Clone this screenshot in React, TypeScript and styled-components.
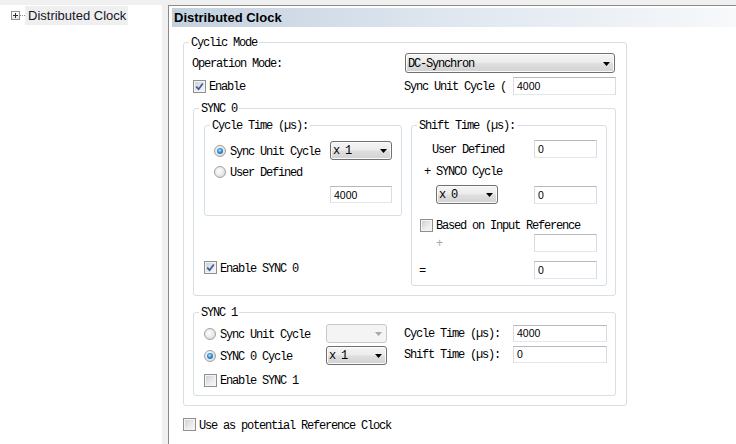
import React from "react";
import styled, { createGlobalStyle, css } from "styled-components";

const Global = createGlobalStyle`
  html, body { margin: 0; padding: 0; background: #f0f0f0; }
  body { width: 736px; height: 444px; overflow: hidden; }
`;

const monoFont = css`
  font-family: "Liberation Mono", "DejaVu Sans Mono", monospace;
  font-size: 12px;
  letter-spacing: -1.2px;
  white-space: nowrap;
`;

const Screen = styled.div`
  display: flex;
  gap: 6px;
  height: 444px;
  padding-top: 5px;
  box-sizing: border-box;
`;

const TreePane = styled.div`
  width: 162px;
  flex: none;
  background: #fff;
`;

const TreeItem = styled.div`
  display: flex;
  align-items: center;
  height: 19px;
  padding-top: 1px;
`;

const Expander = styled.span`
  position: relative;
  width: 9px;
  height: 9px;
  box-sizing: border-box;
  margin-left: 11px;
  border: 1px solid #919191;
  background: linear-gradient(#ffffff, #e4e4e4);
  flex: none;
  &::before {
    content: "";
    position: absolute;
    left: 1px;
    top: 3px;
    width: 5px;
    height: 1px;
    background: #2b2b2b;
  }
  &::after {
    content: "";
    position: absolute;
    left: 3px;
    top: 1px;
    width: 1px;
    height: 5px;
    background: #2b2b2b;
  }
`;

const Connector = styled.span`
  width: 5px;
  border-top: 1px dotted #8a8a8a;
  flex: none;
`;

const TreeLabel = styled.span`
  height: 19px;
  line-height: 19px;
  padding: 0 2px 0 3px;
  margin-top: -1px;
  background: #efefef;
  font-family: "Liberation Sans", Arial, sans-serif;
  font-size: 13px;
  color: #141428;
  white-space: nowrap;
`;

const MainPane = styled.div`
  flex: 1;
  background: #fff;
  border-top: 1px solid #8a8a8a;
  border-left: 1px solid #8a8a8a;
  display: flex;
  flex-direction: column;
`;

const Header = styled.div`
  margin: 2px 0 0 3px;
  height: 19px;
  line-height: 19px;
  padding-left: 2px;
  background: linear-gradient(90deg, #c3d1df 0%, #dde5ee 45%, #f7f9fb 100%);
  font-family: "Liberation Sans", Arial, sans-serif;
  font-weight: bold;
  font-size: 13px;
  color: #000;
`;

const Body = styled.div`
  padding: 15px 0 0 14px;
`;

const Group = styled.div<{ $pad: string; $w?: number; $mt?: number }>`
  position: relative;
  box-sizing: border-box;
  border: 1px solid #d5dfe5;
  border-radius: 3px;
  padding: ${(p) => p.$pad};
  margin-top: ${(p) => p.$mt ?? 0}px;
  ${(p) => (p.$w !== undefined ? `width: ${p.$w}px; flex: none;` : "")}
`;

const Legend = styled.span`
  ${monoFont};
  position: absolute;
  top: -8px;
  left: 5px;
  padding: 1px 2px 0;
  line-height: 14px;
  background: #fff;
  color: #000;
`;

const Mono = styled.span<{ $ml?: number; $w?: number; $c?: string }>`
  ${monoFont};
  padding-top: 2px;
  color: ${(p) => p.$c ?? "#000"};
  margin-left: ${(p) => p.$ml ?? 0}px;
  ${(p) => (p.$w !== undefined ? `width: ${p.$w}px; flex: none; overflow: hidden;` : "")}
`;

const Line = styled.div<{ $mt?: number; $mb?: number; $h: number; $between?: boolean }>`
  display: flex;
  align-items: center;
  height: ${(p) => p.$h}px;
  margin-top: ${(p) => p.$mt ?? 0}px;
  margin-bottom: ${(p) => p.$mb ?? 0}px;
  justify-content: ${(p) => (p.$between ? "space-between" : "flex-start")};
`;

const Choice = styled.label<{ $w?: number; $gap: number }>`
  display: flex;
  align-items: center;
  gap: ${(p) => p.$gap}px;
  ${(p) => (p.$w !== undefined ? `width: ${p.$w}px; flex: none;` : "")}
`;

const Columns = styled.div<{ $gap: number }>`
  display: flex;
  gap: ${(p) => p.$gap}px;
`;

const Column = styled.div<{ $w?: number; $spread?: boolean }>`
  display: flex;
  flex-direction: column;
  justify-content: ${(p) => (p.$spread ? "space-between" : "flex-start")};
  ${(p) => (p.$w !== undefined ? `width: ${p.$w}px; flex: none;` : "")}
`;

const CheckBoxFrame = styled.span`
  position: relative;
  width: 13px;
  height: 13px;
  box-sizing: border-box;
  border: 1px solid #8e8f8f;
  background: linear-gradient(135deg, #c9cbcd 0%, #e9eaeb 55%, #f8f8f8 100%);
  box-shadow: inset 0 0 0 1px #f4f4f4;
  flex: none;
  display: flex;
  align-items: center;
  justify-content: center;
`;

const RadioDot = styled.span<{ $on?: boolean }>`
  width: 12px;
  height: 12px;
  box-sizing: border-box;
  border-radius: 50%;
  border: 1px solid #a0a0a0;
  background: radial-gradient(circle at 40% 40%, #fdfdfd 0%, #e6e6e6 60%, #cfcfcf 100%);
  flex: none;
  display: flex;
  align-items: center;
  justify-content: center;
  &::after {
    content: "";
    display: ${(p) => (p.$on ? "block" : "none")};
    width: 6px;
    height: 6px;
    border-radius: 50%;
    background: radial-gradient(circle at 45% 40%, #bfe8ff 0%, #2f8fd8 45%, #114f90 100%);
  }
`;

const SelectBox = styled.div<{ $w: number; $h: number; $ml?: number; $disabled?: boolean }>`
  ${monoFont};
  box-sizing: border-box;
  width: ${(p) => p.$w}px;
  height: ${(p) => p.$h}px;
  margin-left: ${(p) => p.$ml ?? 0}px;
  flex: none;
  border: 1px solid ${(p) => (p.$disabled ? "#c9c9c9" : "#707070")};
  border-radius: 3px;
  background: ${(p) =>
    p.$disabled
      ? "#f4f4f4"
      : "linear-gradient(#f5f5f5 0%, #ececec 45%, #dedede 55%, #d2d2d2 100%)"};
  box-shadow: ${(p) => (p.$disabled ? "none" : "inset 0 0 0 1px #fbfbfb")};
  display: flex;
  align-items: center;
  justify-content: space-between;
  padding: 1px 4px 0 2px;
  color: #000;
`;

const FieldBox = styled.div<{ $w: number; $h: number; $ml?: number }>`
  box-sizing: border-box;
  width: ${(p) => p.$w}px;
  height: ${(p) => p.$h}px;
  margin-left: ${(p) => p.$ml ?? 0}px;
  flex: none;
  border: 1px solid;
  border-color: #b5b8bd #d8dce2 #e3e7ec #d8dce2;
  background: #fff;
  display: flex;
  align-items: center;
  padding-left: 3px;
  font-family: "Liberation Sans", Arial, sans-serif;
  font-size: 10.5px;
  color: #000;
`;

const Check = ({ on }: { on?: boolean }) => (
  <CheckBoxFrame>
    {on && (
      <svg width="9" height="9" viewBox="0 0 9 9">
        <path d="M1.2 4.6 L3.6 7.2 L7.8 1.4" fill="none" stroke="#3d5a9e" strokeWidth="1.7" />
      </svg>
    )}
  </CheckBoxFrame>
);

const Select = ({
  w,
  h,
  value,
  ml,
  disabled,
}: {
  w: number;
  h: number;
  value?: string;
  ml?: number;
  disabled?: boolean;
}) => (
  <SelectBox $w={w} $h={h} $ml={ml} $disabled={disabled}>
    <span>{value}</span>
    <svg width="7" height="4" viewBox="0 0 7 4">
      <path d="M0 0 H7 L3.5 4 Z" fill={disabled ? "#a9a9a9" : "#000"} />
    </svg>
  </SelectBox>
);

const Field = ({ w, h, ml, children }: { w: number; h: number; ml?: number; children?: React.ReactNode }) => (
  <FieldBox $w={w} $h={h} $ml={ml}>
    {children}
  </FieldBox>
);

export default function App() {
  return (
    <>
      <Global />
      <Screen>
        <TreePane>
          <TreeItem>
            <Expander />
            <Connector />
            <TreeLabel>Distributed Clock</TreeLabel>
          </TreeItem>
        </TreePane>
        <MainPane>
          <Header>Distributed Clock</Header>
          <Body>
            <Group $pad="10px 10px 9px 9px" $w={444}>
              <Legend>Cyclic Mode</Legend>
              <Line $h={20}>
                <Mono $ml={-1} $w={213}>
                  Operation Mode:
                </Mono>
                <Select w={210} h={20} value="DC-Synchron" />
              </Line>
              <Line $mt={4} $h={18}>
                <Choice $w={211} $gap={3}>
                  <Check on />
                  <Mono>Enable</Mono>
                </Choice>
                <Mono $w={109}>Sync Unit Cycle (</Mono>
                <Field w={103} h={18}>
                  4000
                </Field>
              </Line>

              <Group $pad="16px 8px 9px 10px" $mt={13}>
                <Legend>SYNC 0</Legend>
                <Columns $gap={9}>
                  <Column $w={198} $spread>
                    <Group $pad="15px 9px 12px 9px">
                      <Legend>Cycle Time (µs):</Legend>
                      <Line $h={19}>
                        <Choice $w={116} $gap={4}>
                          <RadioDot $on />
                          <Mono>Sync Unit Cycle</Mono>
                        </Choice>
                        <Select w={62} h={19} value="x 1" />
                      </Line>
                      <Line $mt={3} $h={18}>
                        <Choice $gap={4}>
                          <RadioDot />
                          <Mono>User Defined</Mono>
                        </Choice>
                      </Line>
                      <Line $mt={5} $h={17}>
                        <Field w={62} h={17} ml={116}>
                          4000
                        </Field>
                      </Line>
                    </Group>
                    <Line $h={17} $mb={10}>
                      <Choice $gap={3}>
                        <Check on />
                        <Mono>Enable SYNC 0</Mono>
                      </Choice>
                    </Line>
                  </Column>

                  <Group $pad="14px 9px 6px 8px" $w={196}>
                    <Legend>Shift Time (µs):</Legend>
                    <Line $h={18} $between>
                      <Mono $ml={12}>User Defined</Mono>
                      <Field w={63} h={18}>
                        0
                      </Field>
                    </Line>
                    <Line $mt={4} $h={18}>
                      <Mono $ml={4}>+ SYNCO Cycle</Mono>
                    </Line>
                    <Line $mt={5} $h={19} $between>
                      <Select ml={16} w={62} h={19} value="x 0" />
                      <Field w={63} h={18}>
                        0
                      </Field>
                    </Line>
                    <Line $mt={13} $h={16}>
                      <Choice $gap={3}>
                        <Check />
                        <Mono>Based on Input Reference</Mono>
                      </Choice>
                    </Line>
                    <Line $mt={1} $h={18} $between>
                      <Mono $ml={16} $c="#a8a8a8">
                        +
                      </Mono>
                      <Field w={63} h={18} />
                    </Line>
                    <Line $mt={9} $h={18} $between>
                      <Mono $ml={-1}>=</Mono>
                      <Field w={63} h={18}>
                        0
                      </Field>
                    </Line>
                  </Group>
                </Columns>
              </Group>

              <Group $pad="11px 8px 6px 10px" $mt={16}>
                <Legend>SYNC 1</Legend>
                <Columns $gap={17}>
                  <Column $w={183}>
                    <Line $h={19}>
                      <Choice $w={122} $gap={4}>
                        <RadioDot />
                        <Mono>Sync Unit Cycle</Mono>
                      </Choice>
                      <Select w={61} h={19} disabled />
                    </Line>
                    <Line $mt={3} $h={19}>
                      <Choice $w={122} $gap={4}>
                        <RadioDot $on />
                        <Mono>SYNC 0 Cycle</Mono>
                      </Choice>
                      <Select w={61} h={19} value="x 1" />
                    </Line>
                    <Line $mt={6} $h={18}>
                      <Choice $gap={3}>
                        <Check />
                        <Mono>Enable SYNC 1</Mono>
                      </Choice>
                    </Line>
                  </Column>
                  <Column>
                    <Line $h={18}>
                      <Mono $w={109}>Cycle Time (µs):</Mono>
                      <Field w={94} h={17}>
                        4000
                      </Field>
                    </Line>
                    <Line $mt={3} $h={18}>
                      <Mono $w={109}>Shift Time (µs):</Mono>
                      <Field w={94} h={17}>
                        0
                      </Field>
                    </Line>
                  </Column>
                </Columns>
              </Group>
            </Group>

            <Line $mt={11} $h={15}>
              <Choice $gap={3}>
                <Check />
                <Mono>Use as potential Reference Clock</Mono>
              </Choice>
            </Line>
          </Body>
        </MainPane>
      </Screen>
    </>
  );
}
